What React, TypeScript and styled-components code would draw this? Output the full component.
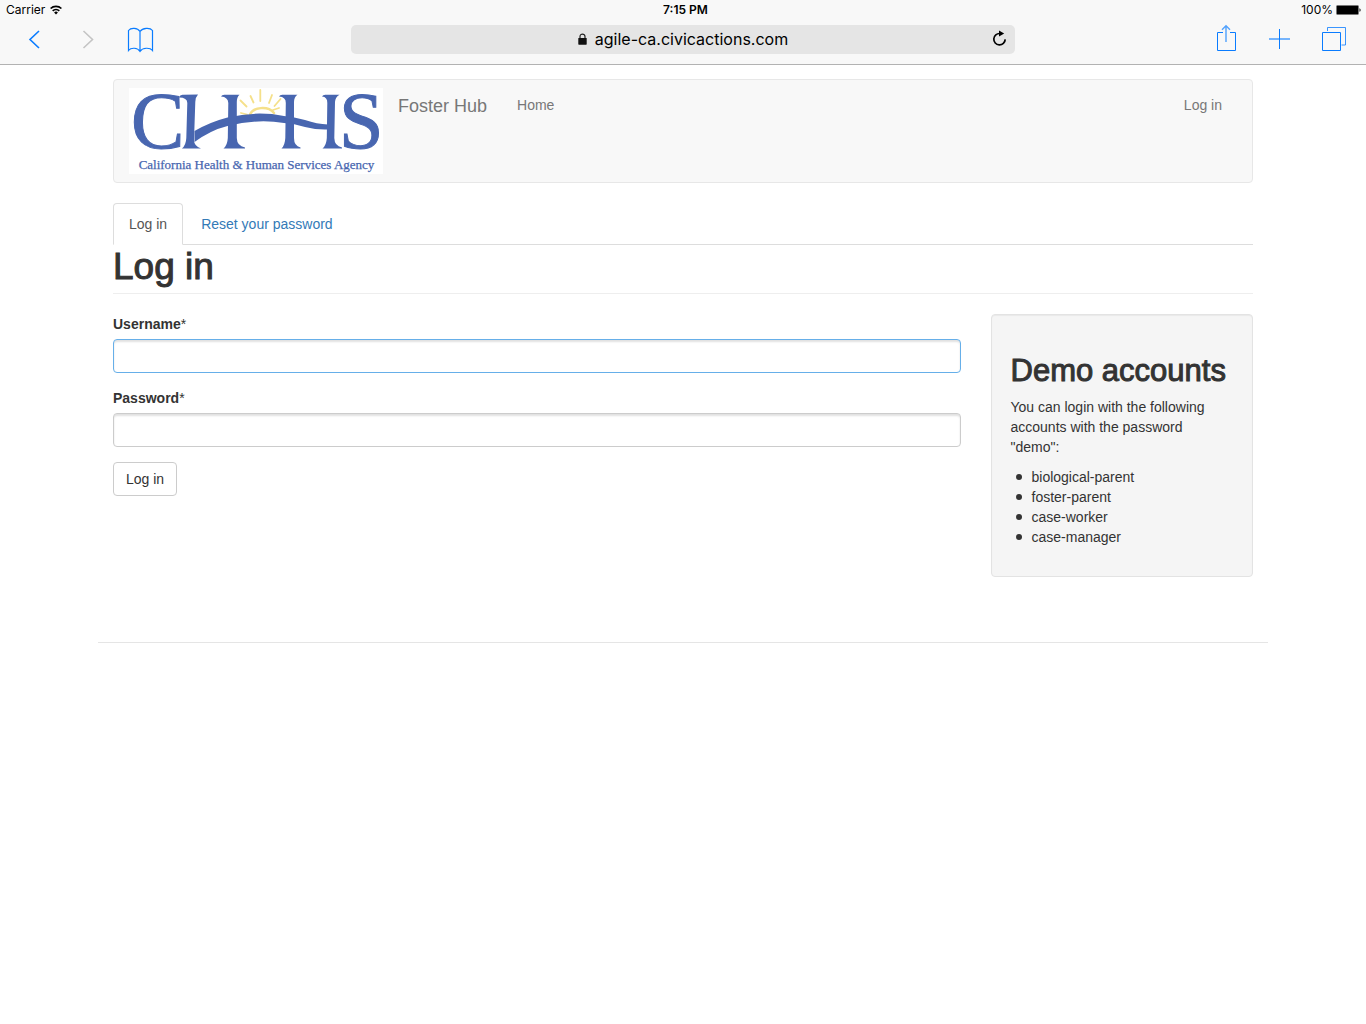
import React from 'react';
import styled, { createGlobalStyle, css } from 'styled-components';

const sans = '"Helvetica Neue", "Liberation Sans", Arial, sans-serif';
const system = 'Inter, Roboto, sans-serif';
const blue = '#0a7cff';
const logoBlue = '#4866b0';

const GlobalStyle = createGlobalStyle`
  *, *::before, *::after { box-sizing: border-box; }
  body {
    margin: 0;
    background: #fff;
    color: #333;
    font: 14px/20px ${sans};
  }
  a { color: #337ab7; text-decoration: none; }
`;

const BrowserBar = styled.header`
  background: #f8f8f8;
  border-bottom: 1px solid #b2b2b2;
  color: #000;
  font-family: ${system};
`;

const StatusBar = styled.div`
  display: grid;
  grid-template-columns: 1fr auto 1fr;
  align-items: center;
  height: 20px;
  padding: 0 5px 0 6px;
  font-size: 12px;
  line-height: 20px;
`;

const StatusGroup = styled.div<{ $end?: boolean }>`
  display: flex;
  align-items: center;
  justify-content: ${(p) => (p.$end ? 'flex-end' : 'flex-start')};
  gap: ${(p) => (p.$end ? 3 : 5)}px;
`;

const Clock = styled.time`
  font-weight: 600;
  padding-left: 4px;
`;

const Toolbar = styled.div`
  display: grid;
  grid-template-columns: 1fr minmax(0, 664px) 1fr;
  padding: 5px 7px 10px;
`;

const ToolGroup = styled.div<{ $end?: boolean }>`
  display: flex;
  justify-content: ${(p) => (p.$end ? 'flex-end' : 'flex-start')};
`;

const ToolButton = styled.button`
  display: flex;
  justify-content: center;
  width: 53px;
  height: 29px;
  padding: 0;
  border: 0;
  background: none;
  color: ${blue};
  &:disabled { color: #c4c4c4; }
`;

const ToolIcon = styled.svg`
  width: 29px;
  height: 29px;
  fill: none;
  stroke: currentColor;
  overflow: visible;
`;

const AddressBar = styled.div`
  display: grid;
  grid-template-columns: 30px 1fr 30px;
  align-items: center;
  height: 29px;
  border-radius: 5px;
  background: #e5e5e5;
`;

const Address = styled.div`
  display: flex;
  align-items: center;
  justify-content: center;
  gap: 8px;
  grid-column: 2;
  padding-bottom: 2px;
  font-size: 16px;
  line-height: 26px;
`;

const ReloadButton = styled.button`
  display: flex;
  padding: 0 0 2px 7px;
  border: 0;
  background: none;
  color: #000;
`;

const Container = styled.div`
  max-width: 1170px;
  margin: 0 auto;
  padding: 14px 15px 0;
`;

const Navbar = styled.nav`
  display: flex;
  align-items: flex-start;
  margin-bottom: 20px;
  padding: 8px 15px;
  border: 1px solid #e7e7e7;
  border-radius: 4px;
  background: #f8f8f8;
`;

const LogoLink = styled.a`
  display: flex;
  background: #fff;
`;

const LogoImage = styled.svg`
  width: 254px;
  height: 86px;
  overflow: visible;
`;

const SiteName = styled.a`
  padding: 8px 15px 7px;
  color: #777;
  font-size: 18px;
`;

const NavLink = styled.a<{ $end?: boolean }>`
  padding: 7px 15px;
  color: #777;
  ${(p) => p.$end && css`margin-left: auto;`}
`;

const Tabs = styled.ul`
  display: flex;
  gap: 2px;
  margin: 0;
  padding: 0;
  border-bottom: 1px solid #ddd;
  list-style: none;
`;

const Tab = styled.a<{ $active?: boolean }>`
  display: block;
  margin-bottom: -1px;
  padding: 10px 15px;
  border: 1px solid transparent;
  border-radius: 4px 4px 0 0;
  ${(p) =>
    p.$active &&
    css`
      border-color: #ddd #ddd #fff;
      background: #fff;
      color: #555;
    `}
`;

const PageTitle = styled.h1`
  margin: 0 0 20px;
  padding: 2px 0 6px;
  border-bottom: 1px solid #eee;
  font-size: 37px;
  font-weight: 500;
  line-height: 40px;
  -webkit-text-stroke: 1px #333;
`;

const Row = styled.div`
  display: flex;
  align-items: flex-start;
  margin: 0 -15px;
`;

const Main = styled.main`
  flex: 0 0 75%;
  padding: 0 15px;
`;

const Sidebar = styled.aside`
  flex: 0 0 25%;
  padding: 0 15px;
`;

const Field = styled.div`
  margin-bottom: 15px;
`;

const Label = styled.label`
  display: block;
  margin-bottom: 5px;
  font-weight: 700;
`;

const Required = styled.span`
  font-weight: 400;
`;

const TextInput = styled.input<{ $active?: boolean }>`
  display: block;
  width: 100%;
  height: 34px;
  padding: 6px 12px;
  border: 1px solid ${(p) => (p.$active ? '#66afe9' : '#ccc')};
  border-radius: 4px;
  background: #fff;
  box-shadow: inset 0 2px 2px rgba(0, 0, 0, 0.12);
  color: #555;
  font: inherit;
  outline: 0;
`;

const SubmitButton = styled.button`
  padding: 6px 12px;
  border: 1px solid #ccc;
  border-radius: 4px;
  background: #fff;
  color: #333;
  font: inherit;
`;

const Well = styled.section`
  padding: 19px;
  border: 1px solid #e3e3e3;
  border-radius: 4px;
  background: #f5f5f5;
  box-shadow: inset 0 1px 1px rgba(0, 0, 0, 0.05);
`;

const WellTitle = styled.h2`
  margin: 0 0 10px;
  padding-top: 21px;
  font-size: 31px;
  font-weight: 500;
  line-height: 32px;
  white-space: nowrap;
  -webkit-text-stroke: 1px #333;
`;

const Text = styled.p`
  margin: 0 0 10px;
`;

const AccountList = styled.ul`
  margin: 0 0 10px;
  padding-left: 5px;
  list-style: none;
`;

const Account = styled.li`
  display: flex;
  align-items: center;
  gap: 10px;
  &::before {
    content: '';
    width: 6px;
    height: 6px;
    border-radius: 50%;
    background: #333;
  }
`;

const Footer = styled.footer`
  margin: 65px -15px 0;
  border-top: 1px solid #e5e5e5;
`;

const WifiIcon = () => (
  <svg width="12" height="10" viewBox="0 0 12 10" fill="none" stroke="#000" strokeWidth="1.7" aria-hidden="true">
    <path d="M.6 3.5a7.7 7.7 0 0 1 10.8 0M2.7 5.9a4.7 4.7 0 0 1 6.6 0" />
    <path d="M6 9.4 4.1 7.5a2.8 2.8 0 0 1 3.8 0Z" fill="#000" stroke="none" />
  </svg>
);

const BatteryIcon = () => (
  <svg width="25" height="10" viewBox="0 0 25 10" aria-hidden="true">
    <rect x=".5" y=".5" width="22" height="9" rx="1" fill="#000" stroke="#777" />
    <path d="M23.5 3.2c1.4.3 1.4 3.3 0 3.6Z" fill="#000" />
  </svg>
);

const LockIcon = () => (
  <svg width="9" height="12" viewBox="0 0 9 12" aria-hidden="true">
    <path d="M2 6V3.4C2 .3 7 .3 7 3.4V6" fill="none" stroke="#222" strokeWidth="1.2" />
    <rect x=".3" y="5" width="8.4" height="6.7" rx=".6" fill="#111" />
  </svg>
);

const ReloadIcon = () => (
  <svg width="15" height="17" viewBox="0 0 15 17" aria-hidden="true">
    <path d="M8 3.5A5.7 5.7 0 1 0 13.2 9.4" fill="none" stroke="#000" strokeWidth="1.7" />
    <path d="M7 .4 12.2 3.5 7 6.6Z" fill="#000" />
  </svg>
);

const AgencyLogo = () => (
  <LogoImage viewBox="0 0 254 86" role="img" aria-label="California Health and Human Services Agency">
    <g stroke="#f5e08a" strokeWidth="1.8" fill="none" strokeLinecap="round">
      <path d="M121 26.500C124 19 139 17.500 145 25" strokeWidth="2.5" />
      <path d="M111.500 12.500 117.500 18.500M121.500 8 124.500 14.500M131.300 2V13M143 7 140 15M151.500 11 145.500 18M112 25 118 26.500M150 20 144 22" />
    </g>
    <g fill={logoBlue}>
      <path d="M65.500 43Q81 34 98.500 29.500Q128 22.500 155 28Q165 29 176 32Q188 36 199 36.500V41.500Q188 42 176 39Q165 35.500 155 35Q128 30.500 98.500 38Q82 42 65.500 54Z" />
      <path d="M50 9.500Q51 6.500 54 6.800L69 6.500Q66.500 9 66.300 14L65 52Q65 58 72 60.500H53Q57 57 57.300 50L58.300 15Q58.300 9.500 50 9.500Z" />
      <path d="M92 8.500Q93 6.500 96 6.800H110.500Q107.800 9 107.800 14V50Q108 58 116 59.500V60.500H94.500Q98.500 57 98.800 50L99.300 15Q99 9 92 8.500Z" />
      <path d="M150 8.500Q151 6.500 154 6.800H168.500Q165 9 165 14V50Q165 58 171.500 59.500V60.500H152.500Q156 57 156.300 50L156.800 15Q157 9 150 8.500Z" />
      <path d="M193 8.500Q194 6.500 197 6.800H210.500Q206.300 9 206 14L205.300 50Q205.500 58 213 59.500V60.500H193.500Q197.500 57 197.800 50L198.300 15Q198.500 9 193 8.500Z" />
      <g fontFamily="Liberation Serif, Times New Roman, serif">
        <g fontSize="80" stroke={logoBlue} strokeWidth="1">
          <text x="2" y="60">C</text>
          <text x="210" y="60">S</text>
        </g>
        <text x="127.500" y="81" fontSize="13" textAnchor="middle" stroke={logoBlue} strokeWidth=".25">
          California Health &amp; Human Services Agency
        </text>
      </g>
    </g>
  </LogoImage>
);

const accounts = ['biological-parent', 'foster-parent', 'case-worker', 'case-manager'];

export default function App() {
  return (
    <>
      <GlobalStyle />
      <BrowserBar>
        <StatusBar>
          <StatusGroup>
            <span>Carrier</span>
            <WifiIcon />
          </StatusGroup>
          <Clock>7:15 PM</Clock>
          <StatusGroup $end>
            <span>100%</span>
            <BatteryIcon />
          </StatusGroup>
        </StatusBar>
        <Toolbar>
          <ToolGroup>
            <ToolButton type="button" aria-label="Back">
              <ToolIcon viewBox="0 0 29 29" strokeWidth="1.6"><path d="M20 6 11 14.500 20 23" /></ToolIcon>
            </ToolButton>
            <ToolButton type="button" aria-label="Forward" disabled>
              <ToolIcon viewBox="0 0 29 29" strokeWidth="1.6"><path d="M11.500 6 20.500 14.500 11.500 23" /></ToolIcon>
            </ToolButton>
            <ToolButton type="button" aria-label="Bookmarks">
              <ToolIcon viewBox="0 0 29 29" strokeWidth="1.2">
                <path d="M15 6.500C12.500 2.700 6 2.200 3.500 5.500V25.500C6 22.300 12.500 22.500 15 26.300C17.500 22.500 25 22.300 27.500 25.500V5.500C25 2.200 17.500 2.700 15 6.500V26.300" />
              </ToolIcon>
            </ToolButton>
          </ToolGroup>
          <AddressBar>
            <Address>
              <LockIcon />
              <span>agile-ca.civicactions.com</span>
            </Address>
            <ReloadButton type="button" aria-label="Reload"><ReloadIcon /></ReloadButton>
          </AddressBar>
          <ToolGroup $end>
            <ToolButton type="button" aria-label="Share">
              <ToolIcon viewBox="0 0 29 29">
                <path d="M11 7.500H5.500V25.500H23.500V7.500H18" />
                <path d="M14 17V1M10 4.700 14 .7 18 4.700" strokeWidth="1.4" opacity=".7" />
              </ToolIcon>
            </ToolButton>
            <ToolButton type="button" aria-label="New tab">
              <ToolIcon viewBox="0 0 29 29">
                <path d="M14.500 4V24" />
                <path d="M4 14H25" strokeWidth="2" opacity=".55" />
              </ToolIcon>
            </ToolButton>
            <ToolButton type="button" aria-label="Show tabs">
              <ToolIcon viewBox="0 0 29 29">
                <path d="M4.500 7.500H22.500V25.500H4.500Z" />
                <path d="M9.500 6V2.500H27.500V20H23.500" opacity=".8" />
              </ToolIcon>
            </ToolButton>
          </ToolGroup>
        </Toolbar>
      </BrowserBar>
      <Container>
        <Navbar>
          <LogoLink href="#"><AgencyLogo /></LogoLink>
          <SiteName href="#">Foster Hub</SiteName>
          <NavLink href="#">Home</NavLink>
          <NavLink href="#" $end>Log in</NavLink>
        </Navbar>
        <Tabs>
          <li><Tab href="#" $active>Log in</Tab></li>
          <li><Tab href="#">Reset your password</Tab></li>
        </Tabs>
        <PageTitle>Log in</PageTitle>
        <Row>
          <Main>
            <form>
              <Field>
                <Label htmlFor="username">Username<Required>*</Required></Label>
                <TextInput id="username" type="text" $active />
              </Field>
              <Field>
                <Label htmlFor="password">Password<Required>*</Required></Label>
                <TextInput id="password" type="password" />
              </Field>
              <SubmitButton type="button">Log in</SubmitButton>
            </form>
          </Main>
          <Sidebar>
            <Well>
              <WellTitle>Demo accounts</WellTitle>
              <Text>You can login with the following accounts with the password "demo":</Text>
              <AccountList>
                {accounts.map((name) => <Account key={name}>{name}</Account>)}
              </AccountList>
            </Well>
          </Sidebar>
        </Row>
        <Footer />
      </Container>
    </>
  );
}
